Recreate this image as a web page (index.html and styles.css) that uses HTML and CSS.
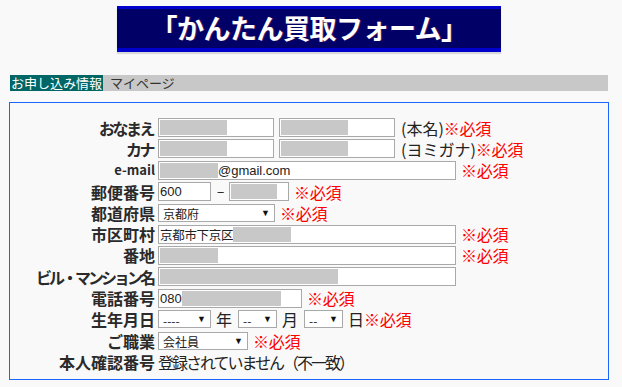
FILE: index.html
```html
<!DOCTYPE html>
<html lang="ja">
<head>
<meta charset="utf-8">
<title>かんたん買取フォーム</title>
<link rel="stylesheet" href="styles.css">
</head>
<body>
<header class="header">
  <div class="banner">「かんたん買取フォーム」</div>
</header>
<nav class="tabs">
  <span class="tab active">お申し込み情報</span>
  <span class="tab">マイページ</span>
</nav>
<section class="box">
  <div class="form">
    <div class="label kana">おなまえ</div>
    <div class="field">
      <span class="input w116"><span class="mask" style="width:67px"></span></span>
      <span class="input w116"><span class="mask" style="width:67px"></span></span>
      <span class="note">(本名)</span><span class="req tight">※必須</span>
    </div>

    <div class="label kana">カナ</div>
    <div class="field">
      <span class="input w116"><span class="mask" style="width:67px"></span></span>
      <span class="input w116"><span class="mask" style="width:67px"></span></span>
      <span class="note">(ヨミガナ)</span><span class="req tight">※必須</span>
    </div>

    <div class="label small">e-mail</div>
    <div class="field">
      <span class="input w298"><span class="mask" style="width:58px"></span><span class="val">@gmail.com</span></span>
      <span class="req">※必須</span>
    </div>

    <div class="label">郵便番号</div>
    <div class="field">
      <span class="input w53"><span class="val">600</span></span>
      <span class="dash">−</span>
      <span class="input w60"><span class="mask" style="width:46px"></span></span>
      <span class="req">※必須</span>
    </div>

    <div class="label">都道府県</div>
    <div class="field">
      <span class="select w117"><span class="opt">京都府</span><span class="arrow">▼</span></span>
      <span class="req">※必須</span>
    </div>

    <div class="label">市区町村</div>
    <div class="field">
      <span class="input w298"><span class="val cjk">京都市下京区</span><span class="mask" style="width:58px"></span></span>
      <span class="req">※必須</span>
    </div>

    <div class="label">番地</div>
    <div class="field">
      <span class="input w298"><span class="mask" style="width:58px"></span></span>
      <span class="req">※必須</span>
    </div>

    <div class="label kana wide">ビル・マンション名</div>
    <div class="field">
      <span class="input w298"><span class="mask" style="width:178px"></span></span>
    </div>

    <div class="label">電話番号</div>
    <div class="field">
      <span class="input w144"><span class="val">080</span><span class="mask" style="width:99px"></span></span>
      <span class="req">※必須</span>
    </div>

    <div class="label">生年月日</div>
    <div class="field">
      <span class="select w53"><span class="opt">----</span><span class="arrow">▼</span></span>
      <span class="unit">年</span>
      <span class="select w39"><span class="opt">--</span><span class="arrow">▼</span></span>
      <span class="unit">月</span>
      <span class="select w39"><span class="opt">--</span><span class="arrow">▼</span></span>
      <span class="unit last">日</span><span class="req tight">※必須</span>
    </div>

    <div class="label">ご職業</div>
    <div class="field">
      <span class="select w90"><span class="opt">会社員</span><span class="arrow">▼</span></span>
      <span class="req">※必須</span>
    </div>

    <div class="label">本人確認番号</div>
    <div class="field">
      <span class="plain">登録されていません（不一致）</span>
    </div>
  </div>
</section>
</body>
</html>
```

FILE: styles.css
```css
* { box-sizing: border-box; }

body {
  margin: 0;
  background: #f9f9f9;
  font-family: "Noto Sans CJK JP", "Noto Sans", sans-serif;
  color: #222;
}

.header {
  padding-top: 6px;
  padding-left: 117px;
  display: flex;
}

.banner {
  width: 384px;
  height: 46px;
  background: #000066;
  border-top: 3px solid #0000cc;
  border-bottom: 4px solid #0000cc;
  box-shadow: 0 2px 1px #d8d8d8;
  color: #fff;
  font-weight: bold;
  font-size: 27px;
  line-height: 38px;
  text-align: center;
  letter-spacing: -0.5px;
  text-shadow: 1px 0 0 rgba(255, 80, 80, 0.35);
}

.tabs {
  margin: 23px 14px 0 10px;
  height: 16px;
  background: #c8c8c8;
  display: flex;
  font-size: 13px;
  line-height: 16px;
}

.tab {
  padding: 0 1px;
  color: #333;
  white-space: nowrap;
}

.tab.active {
  background: #006666;
  color: #fff;
  margin-right: 6px;
}

.box {
  margin: 11px 13px 0 9px;
  height: 278px;
  border: 1px solid #1a66ff;
  padding-top: 14px;
}

.form {
  display: grid;
  grid-template-columns: 145px 1fr;
  grid-auto-rows: 21.3px;
  column-gap: 3px;
}

.label {
  text-align: right;
  font-weight: bold;
  font-size: 16px;
  line-height: 20px;
  color: #2a2a2a;
  white-space: nowrap;
  letter-spacing: 0;
  align-self: center;
}

.label.kana { letter-spacing: -2.5px; padding-right: 2px; }
.label.wide { letter-spacing: -3px; }

.label.small {
  font-size: 13px;
  letter-spacing: 0;
}

.field {
  display: flex;
  align-items: center;
  white-space: nowrap;
}

.input,
.select {
  display: flex;
  align-items: center;
  height: 19px;
  background: #fff;
  border: 1px solid #a9a9a9;
  padding: 0 1px;
  overflow: hidden;
  font-family: "Liberation Sans", "Noto Sans CJK JP", sans-serif;
  font-size: 13px;
  color: #222;
}

.input + .input { margin-left: 5px; }

.mask {
  display: block;
  height: 15px;
  background: #c8c8c8;
  flex: none;
}

.val { line-height: 15px; }
.val.cjk {
  font-family: "Noto Sans CJK JP", sans-serif;
  font-size: 12.5px;
  letter-spacing: -0.3px;
}

.select {
  justify-content: space-between;
  padding: 0 4px 0 4px;
  height: 18px;
}

.opt {
  font-family: "Noto Sans CJK JP", "Liberation Sans", sans-serif;
  font-size: 12px;
  line-height: 15px;
  padding-top: 2px;
}

.arrow {
  font-size: 9px;
  color: #111;
  line-height: 10px;
}

.w53 { width: 53px; }
.w39 { width: 39px; }
.w60 { width: 60px; }
.w90 { width: 90px; }
.w116 { width: 116px; }
.w117 { width: 117px; }
.w144 { width: 144px; }
.w298 { width: 298px; }

.note,
.unit,
.plain {
  font-size: 16px;
  line-height: 20px;
  color: #222;
}

.note { margin-left: 6px; letter-spacing: 0; }

.unit { margin: 0 6px 0 5px; }
.unit.last { margin-right: 0; }

.plain { letter-spacing: -2px; }

.dash {
  font-size: 13px;
  margin: 0 6px 0 6px;
  width: 6px;
  color: #222;
}

.req {
  color: #ff0000;
  font-size: 16px;
  line-height: 20px;
  margin-left: 5px;
  letter-spacing: -0.3px;
}

.req.tight { margin-left: 0; }
```
